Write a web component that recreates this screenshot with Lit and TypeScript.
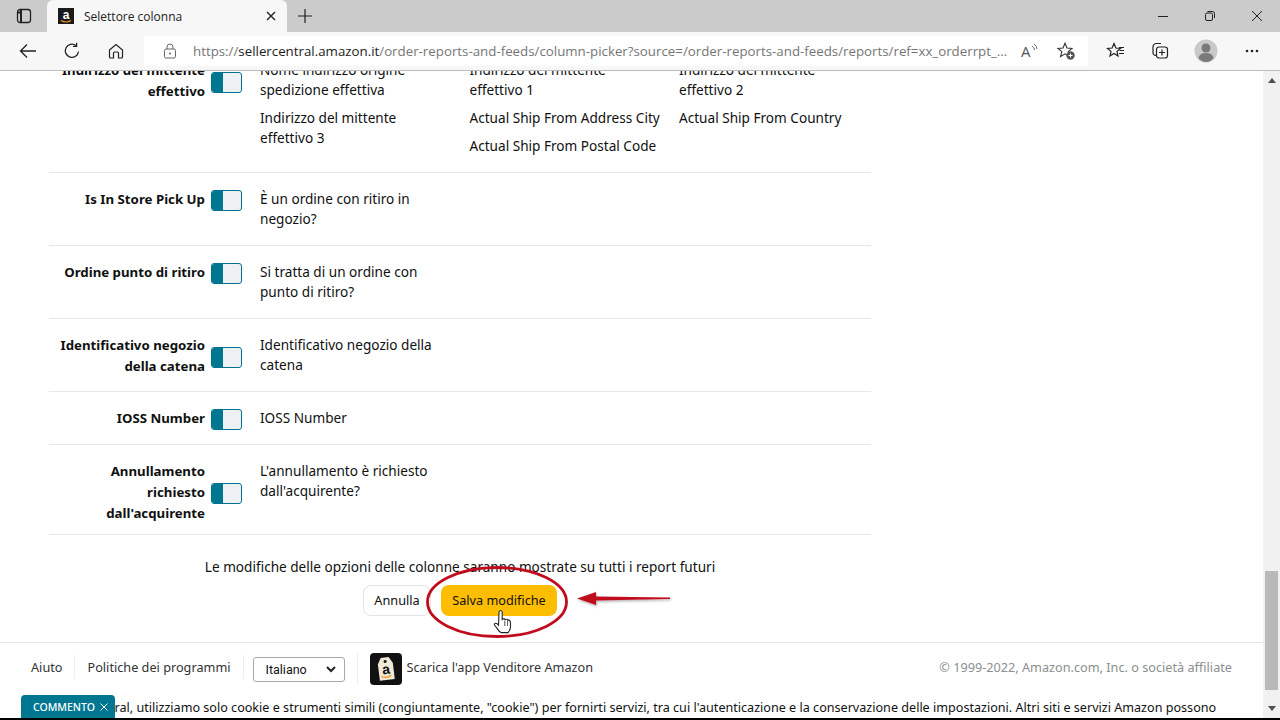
import { LitElement, html, css } from "lit";
import { customElement } from "lit/decorators.js";

const RED = "#c00d1e";

type Row = { label: string; cols: string[][] };
const rows: Row[] = [
  {
    label: "Indirizzo del mittente effettivo",
    cols: [
      ["Nome indirizzo origine spedizione effettiva", "Indirizzo del mittente effettivo 3"],
      ["Indirizzo del mittente effettivo 1", "Actual Ship From Address City", "Actual Ship From Postal Code"],
      ["Indirizzo del mittente effettivo 2", "Actual Ship From Country"],
    ],
  },
  { label: "Is In Store Pick Up", cols: [["È un ordine con ritiro in negozio?"]] },
  { label: "Ordine punto di ritiro", cols: [["Si tratta di un ordine con punto di ritiro?"]] },
  { label: "Identificativo negozio della catena", cols: [["Identificativo negozio della catena"]] },
  { label: "IOSS Number", cols: [["IOSS Number"]] },
  { label: "Annullamento richiesto dall'acquirente", cols: [["L'annullamento è richiesto dall'acquirente?"]] },
];

@customElement("app-root")
export class AppRoot extends LitElement {
  static styles = css`
    :host { display: block; width: 1280px; height: 720px; overflow: hidden; background: #fff; font-family: "Noto Sans", Roboto, sans-serif; font-size: 13.6px; color: #0f1111; }
    * { box-sizing: border-box; }
    .shell { display: flex; flex-direction: column; height: 720px; position: relative; }
    .tabs { height: 32px; background: #cbcbcb; display: flex; align-items: flex-end; flex: none; }
    .side { width: 47px; height: 32px; display: flex; align-items: center; justify-content: center; }
    .tab { width: 240px; height: 32px; background: #f7f7f7; border-radius: 6px 6px 0 0; display: flex; align-items: center; padding: 0 11px; font: 12px "Open Sans", sans-serif; color: #222; }
    .tab .title { margin-left: 10px; flex: 1; }
    .plus { width: 36px; height: 32px; display: flex; align-items: center; justify-content: center; }
    .spacer { flex: 1; }
    .win { width: 47px; height: 32px; display: flex; align-items: center; justify-content: center; }
    .tools { height: 39px; flex: none; background: #f7f7f7; border-bottom: 1px solid #bdbdbd; display: flex; align-items: center; }
    .tb { display: flex; align-items: center; justify-content: center; width: 44px; height: 32px; flex: none; }
    .tb.first { margin-left: 6px; }
    .url { width: 944px; height: 30px; margin-left: 6px; background: #fff; display: flex; align-items: center; flex: none; margin-top: -1px; }
    .lock { width: 49px; display: flex; justify-content: flex-end; padding-right: 16px; flex: none; }
    .addr { font: 13.3px "Open Sans", sans-serif; color: #767676; white-space: nowrap; width: 816px; overflow: hidden; flex: none; }
    .addr b { font-weight: 400; color: #1c1c1c; }
    .read { width: 32px; display: flex; justify-content: center; flex: none; margin-left: 5px; }
    .fav { width: 40px; display: flex; justify-content: center; flex: none; }
    .b1 { margin-left: 6px; }
    .b3 { margin-left: 2px; }
    .b4 { margin-left: 2px; }
    .body { flex: 1; display: flex; min-height: 0; }
    .page { flex: 1; min-width: 0; overflow: hidden; display: flex; flex-direction: column; }
    .list { width: 822px; margin: -27px 0 0 49px; flex: none; }
    .row { display: flex; border-bottom: 1px solid #e7e7e7; padding: 16px 0; }
    .left { width: 193px; flex: none; display: flex; align-items: center; align-self: flex-start; margin-bottom: -6px; }
    .label { flex: 1; text-align: right; font-weight: 700; font-size: 13.25px; line-height: 21px; padding-left: 8px; }
    .toggle { width: 31px; height: 21px; flex: none; margin: 1px 0 -1px 6px; border: 1px solid #00728f; border-radius: 3px; background: #eef1f3; overflow: hidden; }
    .toggle i { display: block; width: 11px; height: 100%; background: #007791; }
    .cols { display: flex; margin-left: 18px; flex: 1; }
    .col { width: 209.5px; flex: none; display: flex; flex-direction: column; gap: 8px; padding-right: 18px; line-height: 20px; }
    .msg { text-align: center; width: 822px; margin: 22px 0 0 49px; line-height: 20px; flex: none; }
    .btns { display: flex; justify-content: center; gap: 10px; width: 822px; margin: 8px 0 0 49px; flex: none; }
    .btn { height: 31px; border-radius: 8px; display: flex; align-items: center; justify-content: center; font-size: 12.7px; padding-bottom: 2px; }
    .cancel { width: 68px; background: #fff; border: 1px solid #e3e3e3; }
    .save { width: 116px; background: #fdbd00; }
    .foot { margin-top: 26px; height: 50px; border-top: 1px solid #e7e7e7; display: flex; align-items: center; padding: 0 31px 2px; flex: none; color: #333; font-size: 12.7px; }
    .fl { padding-right: 12px; border-right: 1px solid #eee; height: 24px; line-height: 24px; margin-right: 12px; }
    .fl.near { margin-right: 9px; }
    .sel { width: 92px; height: 25px; border: 1px solid #a9a9a9; border-radius: 3px; display: flex; align-items: center; justify-content: space-between; padding: 0 8px 0 12px; font-family: Roboto, sans-serif; font-size: 12.5px; margin: 5px 0 0; color: #111; flex: none; }
    .app { margin: 4px 5px 0 12px; padding-left: 12px; border-left: 1px solid #eee; display: flex; height: 32px; flex: none; }
    .copy { margin-left: auto; color: #8a8f90; }
    .cookie { white-space: nowrap; padding-left: 51px; line-height: 20px; margin-top: 6px; height: 20px; overflow: hidden; flex: none; color: #111; width: 1225px; font-size: 12.6px; }
    .bar { width: 17px; flex: none; background: #f1f1f1; position: relative; display: flex; flex-direction: column; align-items: center; }
    .thumb { width: 13px; height: 119px; background: #b9b9b9; position: absolute; top: 500px; left: 2px; }
    .arrowup { width: 0; height: 0; border: 4px solid transparent; border-bottom: 5px solid #505050; margin-top: 3px; }
    .arrowdown { width: 0; height: 0; border: 4px solid transparent; border-top: 5px solid #505050; position: absolute; bottom: 3px; }
    .black { height: 2px; background: #000; flex: none; }
    .fb { position: absolute; left: 21px; top: 695px; width: 94px; height: 23px; background: #007791; color: #fff; border-radius: 4px 4px 0 0; display: flex; align-items: center; padding-left: 12px; gap: 5px; font-size: 10.5px; font-weight: 500; }
    .over { position: absolute; left: 0; top: 0; pointer-events: none; }
  `;

  private row(r: Row) {
    return html`<div class="row">
      <div class="left"><div class="label">${r.label}</div><div class="toggle"><i></i></div></div>
      <div class="cols">${r.cols.map((c) => html`<div class="col">${c.map((t) => html`<div>${t}</div>`)}</div>`)}</div>
    </div>`;
  }

  render() {
    return html`<div class="shell">
      <div class="tabs">
        <div class="side"><svg width="16" height="16" viewBox="0 0 16 16" fill="none" stroke="#222" stroke-width="1.3"><rect x="1.5" y="1.5" width="13" height="13" rx="2.5"/><path d="M5 1.5v13M1.500 4.500h3.500" stroke-width="2"/></svg></div>
        <div class="tab">
          <svg width="16" height="16" viewBox="0 0 16 16"><rect width="16" height="16" fill="#1a1a1a"/><text x="8" y="11" font-family="Liberation Sans" font-size="12" font-weight="700" fill="#fff" text-anchor="middle">a</text><path d="M3 12.500q5 3 10 0" stroke="#f49b23" fill="none" stroke-width="1.2"/></svg>
          <span class="title">Selettore colonna</span>
          <svg width="10" height="10" viewBox="0 0 10 10" stroke="#222" stroke-width="1.4"><path d="M1 1l8 8M9 1l-8 8"/></svg>
        </div>
        <div class="plus"><svg width="16" height="16" viewBox="0 0 16 16" stroke="#222" stroke-width="1.2"><path d="M8 1v14M1 8h14"/></svg></div>
        <div class="spacer"></div>
        <div class="win"><svg width="12" height="12" viewBox="0 0 12 12" stroke="#222"><path d="M1 6.500h10"/></svg></div>
        <div class="win"><svg width="12" height="12" viewBox="0 0 12 12" stroke="#222" fill="none"><rect x="1.500" y="3" width="7" height="7.500" rx="1.500"/><path d="M3.500 1.500h5a2 2 0 0 1 2 2V8"/></svg></div>
        <div class="win"><svg width="12" height="12" viewBox="0 0 12 12" stroke="#222"><path d="M1 1l10 10M11 1L1 11"/></svg></div>
      </div>
      <div class="tools">
        <div class="tb first"><svg width="18" height="16" viewBox="0 0 18 16" fill="none" stroke="#222" stroke-width="1.3"><path d="M17 8H1.500M8 1.500L1.500 8 8 14.500"/></svg></div>
        <div class="tb"><svg width="18" height="18" viewBox="0 0 18 18" fill="none" stroke="#222" stroke-width="1.3"><path d="M15.500 9.500A6.600 6.600 0 1 1 13 3.600"/><path d="M13.600 0.800v3.600h-3.600"/></svg></div>
        <div class="tb"><svg width="16" height="16" viewBox="0 0 16 16" fill="none" stroke="#222" stroke-width="1.2"><path d="M1.500 7L8 1.500 14.500 7v7a1 1 0 0 1-1 1H10.500V10a1 1 0 0 0-1-1h-3a1 1 0 0 0-1 1v5H2.500a1 1 0 0 1-1-1z"/></svg></div>
        <div class="url">
          <div class="lock"><svg width="14" height="16" viewBox="0 0 14 16" fill="none" stroke="#666"><rect x="1.500" y="6" width="11" height="9" rx="1.500"/><path d="M4 6V4a3 3 0 0 1 6 0v2"/><circle cx="7" cy="10.500" r="1" fill="#666" stroke="none"/></svg></div>
          <div class="addr">https://<b>sellercentral.amazon.it</b>/order-reports-and-feeds/column-picker?source=/order-reports-and-feeds/reports/ref=xx_orderrpt_...</div>
          <div class="read"><svg width="18" height="16" viewBox="0 0 18 16"><text x="0" y="14" font-family="Open Sans" font-size="15" fill="#555">A</text><path d="M11 3q2.500 1.500 2.500 4M13 1q3 2 3 5" stroke="#555" fill="none" stroke-width=".9"/></svg></div>
          <div class="fav"><svg width="20" height="20" viewBox="0 0 20 20"><path d="M9 2.200l2 4.800 5 .4-3.800 3.200 1.200 5-4.400-2.700L4.600 15.600l1.200-5L2 7.400l5-.4z" fill="none" stroke="#333" stroke-width="1.100"/><circle cx="14.500" cy="14.500" r="4.200" fill="#555"/><path d="M14.500 12.500v4M12.500 14.500h4" stroke="#fff"/></svg></div>
        </div>
        <div class="tb b1"><svg width="20" height="20" viewBox="0 0 20 20" fill="none" stroke="#222" stroke-width="1.200"><path d="M8 2.500l1.900 4.500 4.600.4-3.500 3 1 4.600L8 12.500 4 15l1-4.600-3.500-3L6.100 7z"/><path d="M13 6.500h5M13.500 9.500h4.500M13 12.500h5"/></svg></div>
        <div class="tb"><svg width="18" height="18" viewBox="0 0 18 18" fill="none" stroke="#222" stroke-width="1.200"><path d="M5 13.500A3 3 0 0 1 2 11V5a3.500 3.500 0 0 1 3.500-3.500H10"/><rect x="5.500" y="5" width="11" height="11" rx="2.500"/><path d="M11 7.500v6M8 10.500h6"/></svg></div>
        <div class="tb b3"><svg width="24" height="24" viewBox="0 0 24 24"><circle cx="12" cy="12" r="11.500" fill="#c9c9c9"/><circle cx="12" cy="9" r="4.500" fill="#7a7a7a"/><path d="M4.500 19q1-5 7.500-5t7.500 5q-3 4-7.500 4t-7.500-4z" fill="#7a7a7a"/></svg></div>
        <div class="tb b4"><svg width="14" height="4" viewBox="0 0 14 4" fill="#222"><circle cx="2" cy="2" r="1.300"/><circle cx="7" cy="2" r="1.300"/><circle cx="12" cy="2" r="1.300"/></svg></div>
      </div>
      <div class="body">
        <div class="page">
          <div class="list">${rows.map((r) => this.row(r))}</div>
          <div class="msg">Le modifiche delle opzioni delle colonne saranno mostrate su tutti i report futuri</div>
          <div class="btns"><div class="btn cancel">Annulla</div><div class="btn save">Salva modifiche</div></div>
          <div class="foot">
            <span class="fl">Aiuto</span>
            <span class="fl near">Politiche dei programmi</span>
            <div class="sel"><span>Italiano</span><svg width="10" height="7" viewBox="0 0 10 7" fill="none" stroke="#222" stroke-width="2"><path d="M1 1l4 4 4-4"/></svg></div>
            <div class="app"><svg width="32" height="32" viewBox="0 0 32 32"><rect width="32" height="32" rx="4" fill="#111"/><g transform="rotate(-7 16 16)"><path d="M12 4.500h8l3.500 6v16.500h-15V10.500z" fill="#efe9d8"/><circle cx="16" cy="8.500" r="1.500" fill="#111"/><text x="16" y="21" font-family="Liberation Sans" font-size="14" font-weight="700" fill="#111" text-anchor="middle">a</text><path d="M10.500 23q5 2.500 10 0" stroke="#f49b23" fill="none" stroke-width="1.300"/></g></svg></div>
            <span>Scarica l'app Venditore Amazon</span>
            <span class="copy">© 1999-2022, Amazon.com, Inc. o società affiliate</span>
          </div>
          <div class="cookie">Seller Central, utilizziamo solo cookie e strumenti simili (congiuntamente, "cookie") per fornirti servizi, tra cui l'autenticazione e la conservazione delle impostazioni. Altri siti e servizi Amazon possono</div>
        </div>
        <div class="bar"><div class="arrowup"></div><div class="thumb"></div><div class="arrowdown"></div></div>
      </div>
      <div class="black"></div>
      <div class="fb"><span>COMMENTO</span><svg width="8" height="8" viewBox="0 0 8 8" stroke="#fff" stroke-width="1"><path d="M.5.5l7 7M7.500.5l-7 7"/></svg></div>
      <svg class="over" width="1280" height="720" viewBox="0 0 1280 720" fill="none">
        <defs><filter id="s" x="-20%" y="-50%" width="140%" height="200%"><feDropShadow dx="1" dy="1.500" stdDeviation="1" flood-color="#000" flood-opacity=".3"/></filter></defs>
        <ellipse cx="497" cy="602" rx="69.500" ry="34.500" stroke="${RED}" stroke-width="2.800"/>
        <g filter="url(#s)"><path d="M670 597.500L595 596.500V600.500L670 599z" fill="${RED}"/><path d="M577 598.500L596 592V605z" fill="${RED}"/></g>
        <path d="M499 612.500q0-2 1.600-2t1.600 2V619.500q1.500-1.500 2.600-.3l.2.500q1.500-1 2.600 0l.2.600q1.500-.5 2.200.8q.5.8.5 2v4q0 3-2.500 5.500h-7q-1.500-.5-3-3l-3.500-4.500q-.5-1.500 1-1.800q1.500-.2 3 1.800z" fill="#fff" stroke="#222" stroke-width="1.100"/>
        <path d="M504.800 621v5M507.600 621v5" stroke="#222" stroke-width=".8"/>
      </svg>
    </div>`;
  }
}
